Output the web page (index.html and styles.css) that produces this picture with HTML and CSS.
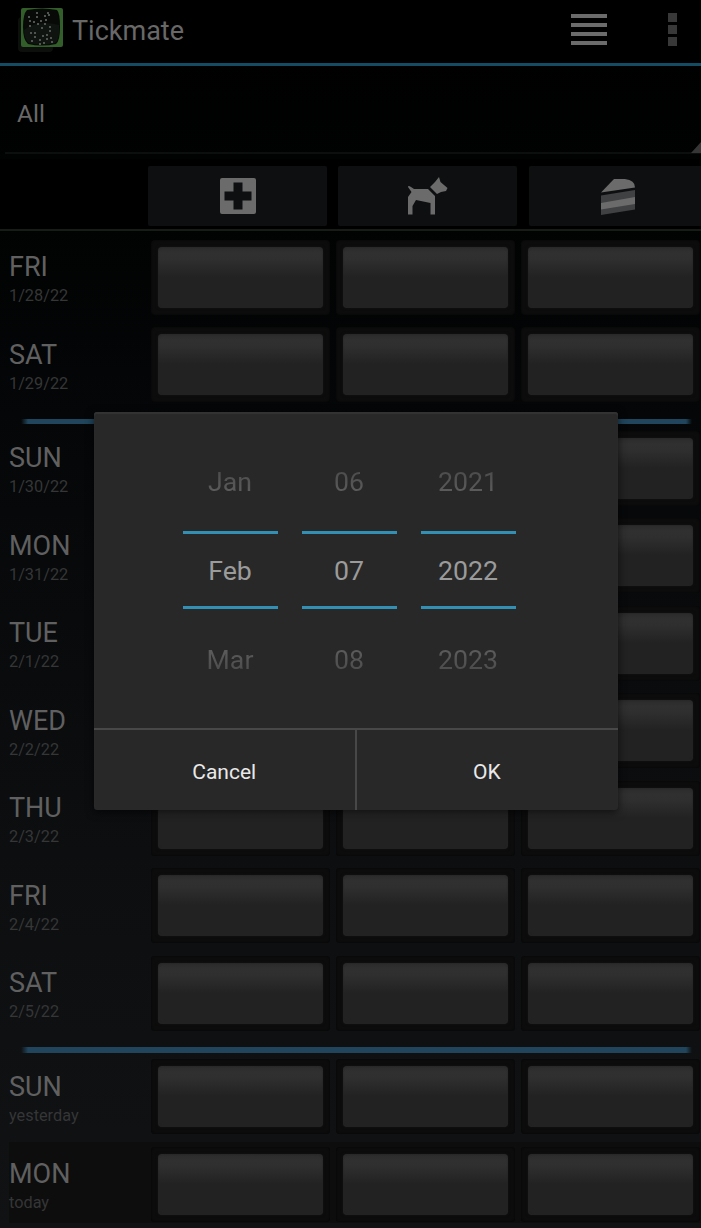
FILE: index.html
```
<!DOCTYPE html>
<html lang="en">
<head>
<meta charset="utf-8">
<title>Tickmate</title>
<link rel="stylesheet" href="styles.css">
</head>
<body>
<div class="app">
  <header class="bar">
    <svg class="logo" width="48" height="48" viewBox="0 0 48 48">
      <rect x="1" y="11" width="35" height="35" rx="4" fill="#0d0f0d"/>
      <rect x="4" y="2" width="42" height="39" rx="2" fill="#325e29"/>
      <path d="M10 4Q25 1 40 4Q43 7 43 21Q43 35 39 38Q25 41 11 38Q6 34 6 21Q6 8 10 4Z" fill="#070a07"/>
      <path d="M7 24Q20 13 42 19Q43 34 38 37Q24 40 12 37Q7 33 7 24Z" fill="#101410"/>
      <path d="M20 6v2M20 10v2M31 6v2M32 8v2M28 9v2M12 10v2M13 14v2M17 15v2M13 19v2M24 14v2M29 13v2M28 17v2M21 17v2M25 21v2M33 20v2M33 24v2M14 26v2M18 26v2M18 30v2M26 29v2M30 28v2M30 32v2M34 31v2M35 35v2M23 33v2M23 37v2M27 36v2M15 34v2" stroke="#505450" stroke-width="2"/>
    </svg>
    <h1 class="title">Tickmate</h1>
    <svg class="list-icon" width="36" height="34" viewBox="0 0 36 34" fill="#6b6b6b"><path d="M0 1h36v4H0zM0 10h36v4H0zM0 19h36v4H0zM0 28h36v4H0z"/></svg>
    <svg class="more-icon" width="9" height="34" viewBox="0 0 9 34" fill="#383838"><path d="M0 0h9v9H0zM0 12h9v9H0zM0 24h9v9H0z"/></svg>
  </header>
  <div class="spinner"><span>All</span><i class="corner"></i></div>
  <div class="heads">
    <div class="head"><svg width="36" height="36" viewBox="0 0 36 36"><path fill="#6b6b6b" fill-rule="evenodd" d="M2 0h32q2 0 2 2v32q0 2-2 2H2q-2 0-2-2V2q0-2 2-2zM13.500 4.500v9h-9v9h9v9h9v-9h9v-9h-9v-9z"/></svg></div>
    <div class="head"><svg width="40" height="38" viewBox="0 0 40 38" fill="#6b6b6b"><path d="M0 10Q0 8 3 10L6 12H20L27 19V37.500H22.500V26L8 23L4.500 29V37.500H0V20L3.500 15Z"/><path d="M22 10L27 5L31 0L32.500 5L39.500 11L38 14L33 15L29 17Z"/></svg></div>
    <div class="head"><svg width="34" height="37" viewBox="0 0 34 37"><path fill="#6b6b6b" d="M0 14.500L13 1H24Q34 2 34 9.500Z"/><path fill="#404143" d="M0 17.500L34 12V31.500L0 37Z"/><path fill="#6b6b6b" d="M0 25L34 19V26L0 31.500Z"/></svg></div>
  </div>
  <main class="days">
    <section class="day"><div class="label"><b>FRI</b><small>1/28/22</small></div><i class="cell"></i><i class="cell"></i><i class="cell"></i></section>
    <section class="day"><div class="label"><b>SAT</b><small>1/29/22</small></div><i class="cell"></i><i class="cell"></i><i class="cell"></i></section>
    <div class="week"></div>
    <section class="day"><div class="label"><b>SUN</b><small>1/30/22</small></div><i class="cell"></i><i class="cell"></i><i class="cell"></i></section>
    <section class="day"><div class="label"><b>MON</b><small>1/31/22</small></div><i class="cell"></i><i class="cell"></i><i class="cell"></i></section>
    <section class="day"><div class="label"><b>TUE</b><small>2/1/22</small></div><i class="cell"></i><i class="cell"></i><i class="cell"></i></section>
    <section class="day"><div class="label"><b>WED</b><small>2/2/22</small></div><i class="cell"></i><i class="cell"></i><i class="cell"></i></section>
    <section class="day"><div class="label"><b>THU</b><small>2/3/22</small></div><i class="cell"></i><i class="cell"></i><i class="cell"></i></section>
    <section class="day"><div class="label"><b>FRI</b><small>2/4/22</small></div><i class="cell"></i><i class="cell"></i><i class="cell"></i></section>
    <section class="day"><div class="label"><b>SAT</b><small>2/5/22</small></div><i class="cell"></i><i class="cell"></i><i class="cell"></i></section>
    <div class="week"></div>
    <section class="day"><div class="label"><b>SUN</b><small>yesterday</small></div><i class="cell"></i><i class="cell"></i><i class="cell"></i></section>
    <section class="day today"><div class="label"><b>MON</b><small>today</small></div><i class="cell"></i><i class="cell"></i><i class="cell"></i></section>
  </main>
  <div class="dialog">
    <div class="pickers">
      <div class="picker"><span class="before">Jan</span><span class="current">Feb</span><span class="after">Mar</span></div>
      <div class="picker"><span class="before">06</span><span class="current">07</span><span class="after">08</span></div>
      <div class="picker"><span class="before">2021</span><span class="current">2022</span><span class="after">2023</span></div>
    </div>
    <div class="actions"><button>Cancel</button><button>OK</button></div>
  </div>
</div>
</body>
</html>
```
FILE: styles.css
```
* { box-sizing: border-box; }
body { margin: 0; background: #000; font-family: Roboto, sans-serif; }
.app {
  position: relative;
  width: 701px;
  height: 1228px;
  overflow: hidden;
  background: linear-gradient(#000 0, #010202 220px, #07090b 560px, #0c0e10 850px, #101214 1228px);
}
.bar {
  display: flex;
  align-items: center;
  height: 65.5px;
  padding: 0 24px 3px 17px;
  border-bottom: 3px solid #134c63;
  background: #000;
}
.title { margin: 0 auto 0 7px; padding-top: 2px; font-size: 27px; line-height: 32px; font-weight: 400; color: #686868; }
.list-icon { margin-right: 61px; }
.spinner {
  position: relative;
  height: 88.5px;
  margin-left: 5px;
  padding: 32px 0 0 12px;
  border-bottom: 2px solid #0d0f0e;
  font-size: 24.5px;
  line-height: 32px;
  color: #686868;
}
.corner {
  position: absolute;
  right: 0;
  bottom: -1px;
  width: 10px;
  height: 11px;
  background: #363636;
  clip-path: polygon(100% 0, 100% 100%, 0 100%);
}
.heads {
  display: flex;
  gap: 11.4px;
  height: 77px;
  padding: 12px 0 3px 148px;
  border-bottom: 2px solid #171c17;
  background: linear-gradient(#010202 5px, #000 5px);
}
.head {
  display: flex;
  flex: 0 0 179px;
  align-items: center;
  justify-content: center;
  height: 60px;
  border-radius: 2px;
  background: #0d0f11;
}
.days { padding-top: 3px; }
.day { display: flex; height: 87.5px; padding: 5.8px 0 6px 9px; }
.label { flex: 0 0 141.5px; padding-top: 11.5px; }
.label b, .label small { display: block; font-weight: 400; }
.label b { font-size: 27px; line-height: 32px; color: #606060; }
.label small { margin-top: 3px; font-size: 16.3px; line-height: 20px; color: #353636; }
.cell {
  flex: 0 0 179px;
  height: 75px;
  margin-right: 6.2px;
  padding: 7px;
  border-radius: 4px;
  background: #0c0c0c;
  box-shadow: inset 0 0 2px #050505;
}
.cell::before {
  content: "";
  display: block;
  height: 61px;
  border-radius: 4px;
  background: linear-gradient(#2b2b2b, #303030 6px, #2f2f2f 12px, #222 30px, #222);
  box-shadow: inset 0 0 2px #252525, 0 0 3px #141414;
}
.today { background: linear-gradient(#0d0d0d, #0d0d0d) 9px 1px / 100% 81px no-repeat; }
.week { height: 16px; padding: 9.5px 9px 0 21px; }
.week::before {
  content: "";
  display: block;
  height: 5.5px;
  background: linear-gradient(90deg, transparent, #20455c 7px, #20455c calc(100% - 6px), transparent);
}
.dialog {
  position: absolute;
  left: 94px;
  top: 412px;
  width: 524px;
  height: 398px;
  border-radius: 3px;
  background: #282828;
  box-shadow: inset 0 2px 1px #333, 0 2px 9px rgba(0, 0, 0, .65);
}
.pickers { display: flex; gap: 24px; height: 316px; padding: 0 0 0 88.5px; }
.picker {
  width: 95px;
  padding-top: 54px;
  text-align: center;
  font-size: 26.7px;
  line-height: 32px;
}
.picker span { display: block; }
.before, .after {
  color: transparent;
  background-clip: text;
}
.before { background-image: linear-gradient(#484848, #606060); }
.after { background-image: linear-gradient(#606060, #484848); }
.current {
  height: 78px;
  margin: 33px 0 35px;
  padding-top: 21px;
  border: solid #3190b3;
  border-width: 3px 0;
  color: #9b9b9b;
}
.actions { display: flex; height: 82px; border-top: 2px solid #484848; }
button {
  flex: 1;
  padding: 3px 0 0;
  border: 0;
  background: none;
  font: 21px/28px Roboto, sans-serif;
  color: #e9e9e9;
}
button + button { padding-right: 1px; border-left: 2px solid #484848; }
```
